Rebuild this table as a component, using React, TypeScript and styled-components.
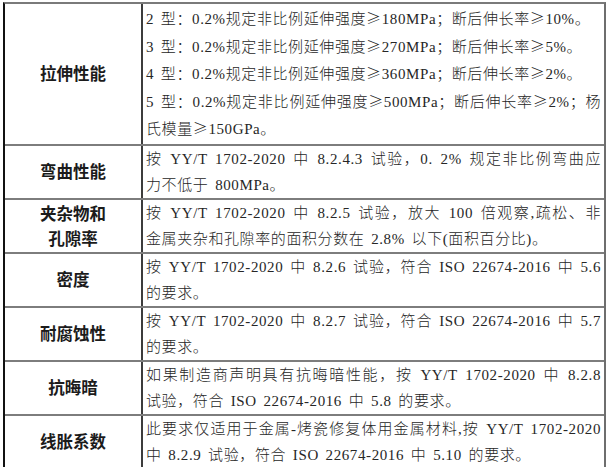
import React from "react";
import styled, { createGlobalStyle } from "styled-components";

const Global = createGlobalStyle`
  html, body { margin: 0; padding: 0; background: #ffffff; }
  body { width: 612px; height: 467px; overflow: hidden; }
`;

const Page = styled.div`
  padding: 2px 0 0 3px;
  width: 612px;
  box-sizing: border-box;
`;

const Table = styled.div`
  width: 603px;
  border-top: 2px solid #7a7a7a;
  border-left: 2px solid #111111;
  border-right: 2px solid #6e6e6e;
  box-sizing: border-box;
`;

const Row = styled.div<{ $pad: string }>`
  display: grid;
  grid-template-columns: 138px 1fr;
  border-bottom: 2px solid #7d7d7d;
  & > * { padding: ${(p) => p.$pad}; }
`;

const Label = styled.div`
  display: flex;
  flex-direction: column;
  align-items: center;
  justify-content: center;
  border-right: 2px solid #3c3c3c;
  font-family: "Noto Sans CJK SC", sans-serif;
  font-weight: 700;
  font-size: 16.5px;
  line-height: 25px;
  color: #1b1b1b;
`;

const Content = styled.div<{ $lh: number }>`
  padding-left: 3px !important;
  padding-right: 3px !important;
  font-family: "Liberation Serif", "Noto Sans CJK SC", serif;
  font-weight: 300;
  font-size: 15px;
  letter-spacing: 0.6px;
  word-spacing: 2.4px;
  line-height: ${(p) => p.$lh}px;
  color: #262626;
  overflow: hidden;
`;

const Line = styled.div<{ $full?: boolean }>`
  white-space: nowrap;
  text-align: justify;
  text-align-last: ${(p) => (p.$full ? "justify" : "left")};
`;

const Sym = styled.span`
  font-family: "Noto Sans CJK SC", sans-serif;
  font-weight: 300;
`;

const renderText = (t: string) =>
  t.split("≥").map((part, i) => (
    <React.Fragment key={i}>
      {i > 0 && <Sym>≥</Sym>}
      {part}
    </React.Fragment>
  ));

type Item = { label: string[]; lines: [string, boolean][]; lh: number; pad: string };

const rows: Item[] = [
  {
    label: ["拉伸性能"],
    lh: 26.6,
    pad: "1px 0 1px",
    lines: [
      ["2 型：0.2%规定非比例延伸强度≥180MPa；断后伸长率≥10%。", false],
      ["3 型：0.2%规定非比例延伸强度≥270MPa；断后伸长率≥5%。", false],
      ["4 型：0.2%规定非比例延伸强度≥360MPa；断后伸长率≥2%。", false],
      ["5 型：0.2%规定非比例延伸强度≥500MPa；断后伸长率≥2%；杨", true],
      ["氏模量≥150GPa。", false],
    ],
  },
  {
    label: ["弯曲性能"],
    lh: 26,
    pad: "0",
    lines: [
      ["按 YY/T 1702-2020 中 8.2.4.3 试验，0. 2% 规定非比例弯曲应", true],
      ["力不低于 800MPa。", false],
    ],
  },
  {
    label: ["夹杂物和", "孔隙率"],
    lh: 26,
    pad: "0",
    lines: [
      ["按 YY/T 1702-2020 中 8.2.5 试验，放大 100 倍观察,疏松、非", true],
      ["金属夹杂和孔隙率的面积分数在 2.8% 以下(面积百分比)。", false],
    ],
  },
  {
    label: ["密度"],
    lh: 26,
    pad: "0",
    lines: [
      ["按 YY/T 1702-2020 中 8.2.6 试验，符合 ISO 22674-2016 中 5.6", true],
      ["的要求。", false],
    ],
  },
  {
    label: ["耐腐蚀性"],
    lh: 26,
    pad: "0",
    lines: [
      ["按 YY/T 1702-2020 中 8.2.7 试验，符合 ISO 22674-2016 中 5.7", true],
      ["的要求。", false],
    ],
  },
  {
    label: ["抗晦暗"],
    lh: 26,
    pad: "0",
    lines: [
      ["如果制造商声明具有抗晦暗性能，按 YY/T 1702-2020 中 8.2.8", true],
      ["试验，符合 ISO 22674-2016 中 5.8 的要求。", false],
    ],
  },
  {
    label: ["线胀系数"],
    lh: 26,
    pad: "0",
    lines: [
      ["此要求仅适用于金属-烤瓷修复体用金属材料,按 YY/T 1702-2020", true],
      ["中 8.2.9 试验，符合 ISO 22674-2016 中 5.10 的要求。", false],
    ],
  },
];

export default function App() {
  return (
    <>
      <Global />
      <Page>
        <Table>
          {rows.map((r, i) => (
            <Row key={i} $pad={r.pad}>
              <Label>
                {r.label.map((l, j) => (
                  <span key={j}>{l}</span>
                ))}
              </Label>
              <Content $lh={r.lh}>
                {r.lines.map(([t, full], j) => (
                  <Line key={j} $full={full}>
                    {renderText(t)}
                  </Line>
                ))}
              </Content>
            </Row>
          ))}
        </Table>
      </Page>
    </>
  );
}
